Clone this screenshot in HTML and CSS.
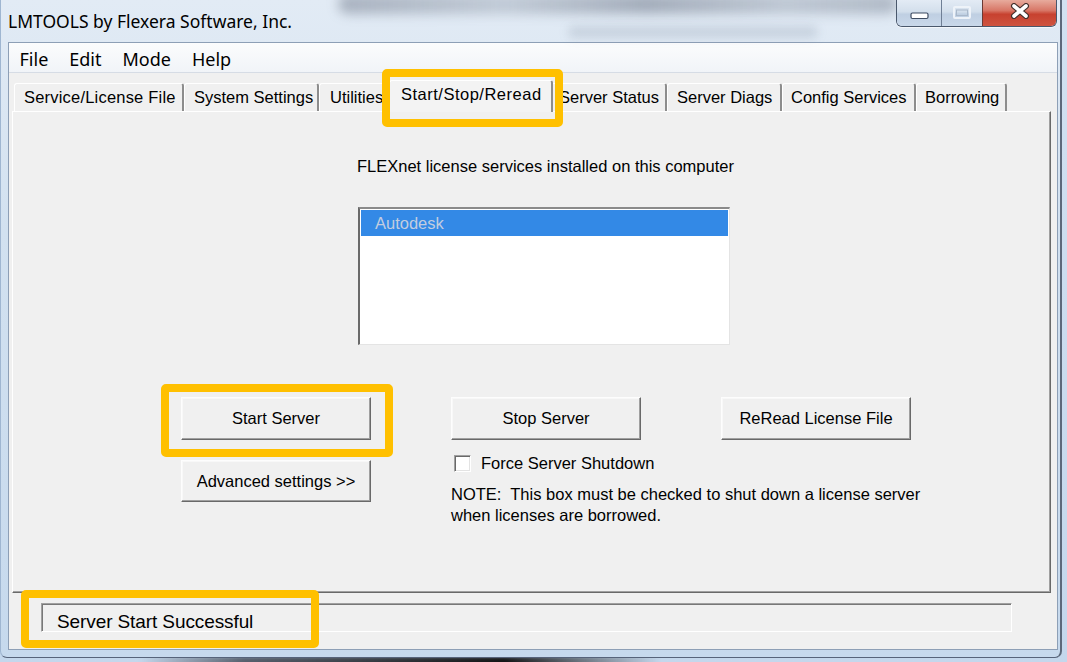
FILE: index.html
```html
<!DOCTYPE html>
<html lang="en">
<head>
<meta charset="utf-8">
<title>LMTOOLS by Flexera Software, Inc.</title>
<link rel="stylesheet" href="styles.css">
</head>
<body>
<div class="window">
  <div class="titlebar">
    <span class="title">LMTOOLS by Flexera Software, Inc.</span>
    <div class="controls">
      <span class="ctl ctl-min">
        <svg width="19" height="8" viewBox="0 0 19 8"><rect x="1" y="1" width="17" height="5.5" rx="1.5" fill="#fff" stroke="#3e4c62" stroke-width="1.2"/></svg>
      </span>
      <span class="ctl ctl-max">
        <svg width="18" height="13" viewBox="0 0 18 13"><rect x="1" y="1" width="16" height="11" rx="1" fill="none" stroke="#eef3f9" stroke-width="2"/><rect x="3.5" y="4" width="11" height="5.5" fill="none" stroke="#a9b8ca" stroke-width="1"/></svg>
      </span>
      <span class="ctl ctl-close">
        <svg width="20" height="16" viewBox="0 0 20 16"><path d="M4 3 L16 13 M16 3 L4 13" stroke="#43302c" stroke-width="6" stroke-linecap="round"/><path d="M4 3 L16 13 M16 3 L4 13" stroke="#fff" stroke-width="3.6" stroke-linecap="round"/></svg>
      </span>
    </div>
  </div>

  <div class="client">
    <div class="menubar">
      <span class="menu-item">File</span>
      <span class="menu-item">Edit</span>
      <span class="menu-item">Mode</span>
      <span class="menu-item">Help</span>
    </div>

    <div class="tabs">
      <span class="tab tab-service">Service/License File</span>
      <span class="tab tab-system">System Settings</span>
      <span class="tab tab-utilities">Utilities</span>
      <span class="tab tab-active">Start/Stop/Reread</span>
      <span class="tab tab-status">Server Status</span>
      <span class="tab tab-diags">Server Diags</span>
      <span class="tab tab-config">Config Services</span>
      <span class="tab tab-borrow">Borrowing</span>
    </div>

    <div class="panel">
      <div class="services">
        <p class="caption">FLEXnet license services installed on this computer</p>
        <div class="listbox">
          <div class="list-item selected">Autodesk</div>
        </div>
      </div>

      <div class="actions">
        <div class="btn-wrap highlight-start"><button class="btn">Start Server</button></div>
        <button class="btn btn-stop">Stop Server</button>
        <button class="btn">ReRead License File</button>
        <button class="btn btn-adv">Advanced settings &gt;&gt;</button>
        <div class="force">
          <label class="check-row"><span class="checkbox"></span><span>Force Server Shutdown</span></label>
          <p class="note">NOTE:&nbsp; This box must be checked to shut down a license server<br>when licenses are borrowed.</p>
        </div>
      </div>
    </div>

    <div class="statusbar">
      <div class="statusbox">
        <span class="status-text">Server Start Successful</span>
        <span class="status-highlight"></span>
      </div>
    </div>
  </div>
</div>
</body>
</html>
```

FILE: styles.css
```css
* { box-sizing: border-box; }

html, body { margin: 0; padding: 0; }

body {
  width: 1067px;
  height: 662px;
  overflow: hidden;
  position: relative;
  background: linear-gradient(180deg, #d2e1f1 0%, #c4d7ec 100%);
  font-family: "Liberation Sans", Arial, sans-serif;
  font-size: 16.5px;
  color: #000;
}

body::after {
  content: "";
  position: absolute;
  left: 140px;
  bottom: -6px;
  width: 520px;
  height: 12px;
  background: linear-gradient(90deg, rgba(40,45,55,0) 0%, rgba(40,45,55,.7) 20%, rgba(10,10,10,.95) 70%, rgba(10,10,10,0) 100%);
  filter: blur(2px);
}

.window {
  position: relative;
  z-index: 1;
  width: 1062px;
  height: 658px;
  display: flex;
  flex-direction: column;
  padding: 0 2px 7px 7px;
  border-left: 1px solid #9fb6d1;
  border-right: 2px solid #5c687b;
  border-bottom: 1px solid #56637a;
  border-radius: 0 0 7px 7px;
  background: linear-gradient(180deg, #e2ebf5 0%, #d2e1f0 35%, #c6d9ed 100%);
}

/* ---------- title bar ---------- */
.titlebar {
  position: relative;
  height: 42px;
  flex: none;
  display: flex;
  align-items: flex-start;
}

.titlebar::before {
  content: "";
  position: absolute;
  left: 330px;
  top: -6px;
  width: 560px;
  height: 20px;
  border-radius: 10px;
  background: linear-gradient(90deg, rgba(60,70,90,.35) 0%, rgba(60,70,90,.2) 30%, rgba(60,70,90,.38) 55%, rgba(60,70,90,.22) 80%, rgba(60,70,90,.3) 100%);
  filter: blur(6px);
}

.titlebar::after {
  content: "";
  position: absolute;
  left: 560px;
  top: 26px;
  width: 250px;
  height: 12px;
  border-radius: 8px;
  background: rgba(90, 105, 130, .18);
  filter: blur(5px);
}

.title {
  position: relative;
  z-index: 1;
  font-family: "Noto Sans", "Liberation Sans", sans-serif;
  font-size: 17.5px;
  line-height: 42px;
  color: #000;
  white-space: nowrap;
}

.controls {
  position: relative;
  z-index: 1;
  margin-left: auto;
  margin-right: 1px;
  display: flex;
  height: 27px;
  border: 1px solid #4a586c;
  border-top: none;
  border-radius: 0 0 6px 6px;
  overflow: hidden;
  box-shadow: 0 1px 0 rgba(255,255,255,.6);
}

.ctl {
  display: flex;
  justify-content: center;
  align-items: flex-start;
  height: 100%;
}

.ctl-min {
  width: 44px;
  padding-top: 12px;
  background: linear-gradient(180deg, #e3ebf5 0%, #d3dfec 45%, #bfcfe2 55%, #c9d8ea 100%);
}

.ctl-max {
  width: 41px;
  padding-top: 6px;
  border-left: 1px solid #6f7f95;
  background: linear-gradient(180deg, #e3ebf5 0%, #d3dfec 45%, #bfcfe2 55%, #c9d8ea 100%);
}

.ctl-close {
  width: 74px;
  padding-top: 3px;
  border-left: 1px solid #6b3a34;
  background: linear-gradient(180deg, #e7ab9d 0%, #d87767 40%, #c7412f 55%, #cf5440 100%);
}

/* ---------- client ---------- */
.client {
  flex: 1;
  display: flex;
  flex-direction: column;
  background: #f0f0f0;
  border: 1px solid #8d9fb6;
}

.menubar {
  height: 30px;
  flex: none;
  display: flex;
  align-items: center;
  padding-top: 2px;
  background: linear-gradient(180deg, #fbfcfd 0%, #f1f4f8 100%);
  border-bottom: 1px solid #d6dce5;
  font-family: "Noto Sans", "Liberation Sans", sans-serif;
  font-size: 18px;
  line-height: 24px;
}

.menu-item {
  padding: 0 10.5px;
}

/* ---------- tabs ---------- */
.tabs {
  display: flex;
  align-items: flex-end;
  height: 31px;
  margin-top: 7px;
  padding-left: 5px;
  flex: none;
  font-size: 16.5px;
}

.tab {
  flex: none;
  height: 28px;
  line-height: 27px;
  padding: 0 0 0 9px;
  white-space: nowrap;
  background: #f0f0f0;
  border-top: 1px solid #fff;
  border-left: 1px solid #fff;
  border-right: 2px solid #8d8d8d;
  border-radius: 3px 3px 0 0;
}

.tab-service { width: 170px; letter-spacing: 0.2px; }
.tab-system { width: 135px; }
.tab-utilities { width: 72px; padding-left: 10px; }
.tab-status { width: 116px; padding-left: 7px; }
.tab-diags { width: 115px; }
.tab-config { width: 134px; padding-left: 8px; }
.tab-borrow { width: 91px; padding-left: 8px; }

.tab-active {
  position: relative;
  z-index: 2;
  width: 164px;
  height: 32px;
  padding: 0 0 4px 11px;
  margin: 0 -2px -1px -2px;
  background: #f3f3f3;
  letter-spacing: 0.5px;
}

.tab-active::after {
  content: "";
  position: absolute;
  left: -8px;
  top: -12px;
  right: -12px;
  bottom: -15px;
  border: 8px solid #ffc000;
  border-radius: 5px;
}

/* ---------- panel ---------- */
.panel {
  flex: none;
  height: 482px;
  margin: 0 6px 0 3px;
  padding-top: 44px;
  border-top: 1px solid #fff;
  border-left: 1px solid #fff;
  border-right: 1px solid #696969;
  border-bottom: 1px solid #696969;
  box-shadow: inset -1px -1px 0 #a0a0a0;
}

.services {
  margin-left: 344px;
}

.caption {
  margin: 0;
  line-height: 20px;
  white-space: nowrap;
}

.listbox {
  width: 372px;
  height: 138px;
  margin-top: 31px;
  margin-left: 1px;
  padding: 1px;
  background: #fff;
  border-style: solid;
  border-width: 2px 1px 1px 2px;
  border-color: #8a8a8a #e4e4e4 #e4e4e4 #6a6a6a;
}

.list-item {
  height: 26px;
  line-height: 26px;
  padding-left: 14px;
}

.list-item.selected {
  background: #3389e6;
  color: #c2cde0;
}

/* ---------- buttons ---------- */
.actions {
  display: grid;
  grid-template-columns: 190px 190px 190px;
  column-gap: 80px;
  row-gap: 13px;
  margin: 52px 0 0 168px;
}

.btn {
  height: 43px;
  width: 190px;
  margin: 0;
  padding: 0;
  font: inherit;
  color: #000;
  background: #f0f0f0;
  border-style: solid;
  border-width: 1px;
  border-color: #fdfdfd #696969 #696969 #fdfdfd;
  box-shadow: inset -1px -1px 0 #a0a0a0, inset 1px 1px 0 #f8f8f8;
  border-radius: 0;
}

.btn-wrap {
  position: relative;
}

.btn-wrap .btn { display: block; }

.highlight-start::after {
  content: "";
  position: absolute;
  left: -20px;
  top: -13px;
  right: -22px;
  bottom: -17px;
  border: 8px solid #ffc000;
  border-radius: 5px;
}

.btn-adv {
  height: 42px;
  margin-top: 7px;
}

.force {
  grid-column: 2 / span 2;
}

.check-row {
  display: flex;
  align-items: center;
  height: 20px;
  gap: 10px;
  padding-left: 3px;
}

.checkbox {
  width: 17px;
  height: 17px;
  flex: none;
  background: #fff;
  border-style: solid;
  border-width: 1px;
  border-color: #a0a0a0 #fff #fff #a0a0a0;
  box-shadow: inset 1px 1px 0 #696969, inset -1px -1px 0 #e3e3e3;
}

.note {
  margin: 11px 0 0;
  line-height: 21px;
  white-space: nowrap;
}

/* ---------- status bar ---------- */
.statusbar {
  flex: 1;
  padding: 10px 0 0 32px;
}

.statusbox {
  position: relative;
  width: 971px;
  height: 29px;
  padding: 9px 0 0 15px;
  font-size: 19px;
  line-height: 18px;
  border-style: solid;
  border-width: 1px;
  border-color: #a0a0a0 #fff #fff #a0a0a0;
  box-shadow: inset 1px 1px 0 #787878;
}

.status-text {
  letter-spacing: -0.1px;
  white-space: nowrap;
}

.status-highlight {
  position: absolute;
  left: -21px;
  top: -14px;
  width: 298px;
  height: 58px;
  border: 8px solid #ffc000;
  border-radius: 5px;
}
```
